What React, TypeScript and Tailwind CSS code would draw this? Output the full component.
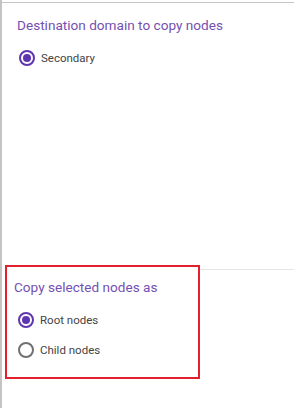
import React from "react";

function Radio({ checked, label }: { checked: boolean; label: string }) {
  return (
    <div className="flex items-center h-[20px]">
      <div
        className={
          "w-[16px] h-[16px] rounded-full border-2 flex items-center justify-center " +
          (checked ? "border-[#5e35b1]" : "border-[#707070]")
        }
      >
        {checked && <div className="w-[8px] h-[8px] rounded-full bg-[#5e35b1]" />}
      </div>
      <span className="ml-[6px] text-[11.5px] text-[#444444] leading-[16px]">{label}</span>
    </div>
  );
}

export default function App() {
  return (
    <div
      className="w-[295px] h-[408px] bg-white border-l-2 border-[#c4c4c4] flex flex-col"
      style={{ fontFamily: "Roboto, 'Liberation Sans', sans-serif" }}
    >
      <div className="mt-[2px] w-[292px] border-t border-[#c4c4c4] h-[263px] flex flex-col">
        <div className="pl-[15px] pt-[12px] text-[13.6px] leading-[20px] text-[#7450b2]">
          Destination domain to copy nodes
        </div>
        <div className="pl-[17px] mt-[13px]">
          <Radio checked label="Secondary" />
        </div>
      </div>
      <div className="flex">
        <div className="ml-[3px] w-[195px] h-[114px] border-2 border-[#e5202e] flex flex-col">
          <div className="pl-[7px] pt-[10px] text-[13.6px] leading-[20px] text-[#7450b2]">
            Copy selected nodes as
          </div>
          <div className="pl-[11px] mt-[13px] flex flex-col gap-[10px]">
            <Radio checked label="Root nodes" />
            <Radio checked={false} label="Child nodes" />
          </div>
        </div>
        <div className="mt-[4px] w-[94px] border-t border-[#e6e6e6] h-0" />
      </div>
    </div>
  );
}
